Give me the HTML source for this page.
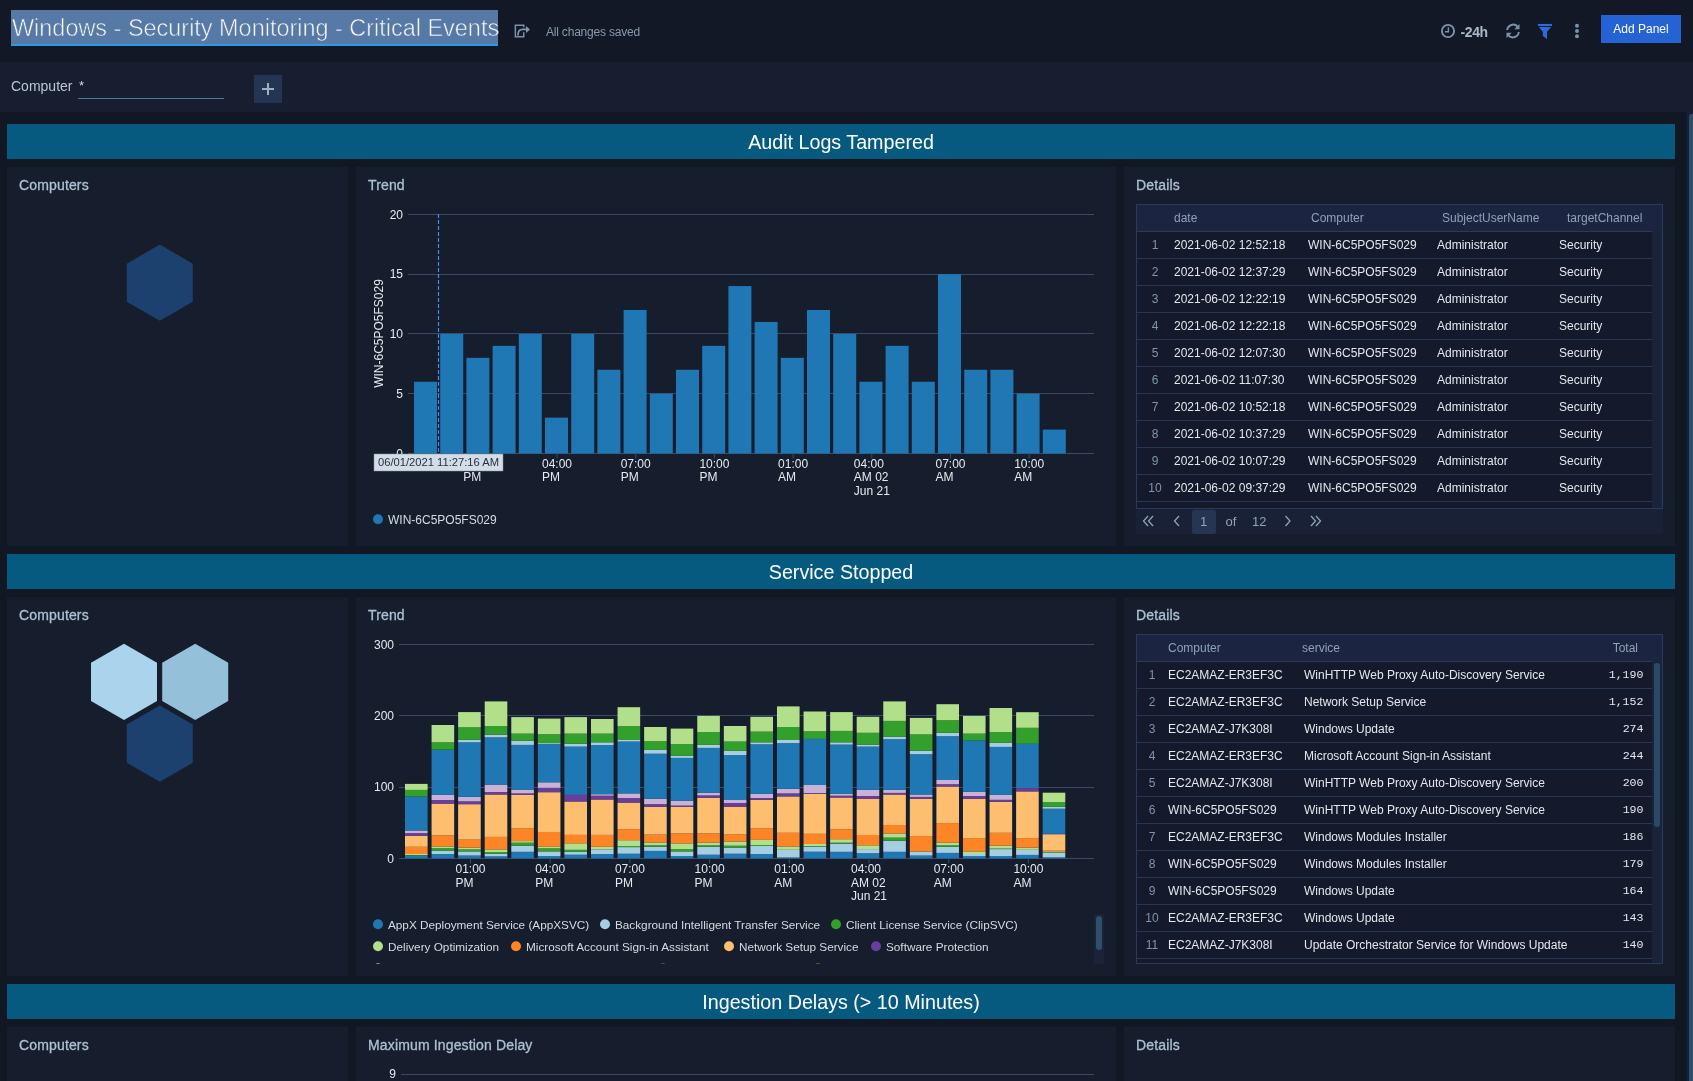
<!DOCTYPE html><html><head><meta charset="utf-8"><style>
*{box-sizing:border-box;margin:0;padding:0}
html,body{width:1693px;height:1081px;overflow:hidden;background:#111723;font-family:"Liberation Sans",sans-serif;}
body{will-change:transform;-webkit-font-smoothing:antialiased}
.a{position:absolute}
.hdr{left:0;top:0;width:1693px;height:62px;background:#121826}
.filt{left:0;top:62px;width:1693px;height:50px;background:#161e2f}
.band{left:7px;width:1668px;height:35px;background:#065a80;color:#fff;font-size:19.7px;text-align:center;line-height:37px}
.panel{background:#161e2e;height:379px}
.ptitle{position:absolute;left:12px;top:10px;font-size:14px;letter-spacing:0.15px;color:#adc0d3;-webkit-text-stroke:0.3px #adc0d3;white-space:nowrap}
svg text{font-family:"Liberation Sans",sans-serif}
.tbl{position:absolute;border:1px solid #293b58;background:#141a2b;overflow:hidden}
.th{position:absolute;left:0;top:0;right:0;height:27px;background:#1b2440}
.row{position:absolute;left:0;height:27px;border-bottom:1px solid #263753;}
.c{position:absolute;top:0;line-height:26px;font-size:12px;color:#e2e7ec;white-space:nowrap}
.hc{position:absolute;top:0;line-height:27px;font-size:12px;color:#8fa2b6;white-space:nowrap}
.num{color:#8194aa}
</style></head><body><div class="a hdr"></div><div class="a" style="left:11px;top:10px;width:487px;height:34px;background:#5779a6"></div><div class="a" style="left:11px;top:44px;width:487px;height:2px;background:#2a9ae6"></div><div class="a" style="left:12px;top:12.4px;font-size:23.45px;line-height:32px;color:#f4f6f8;-webkit-text-stroke:0.55px #5779a6;white-space:nowrap">Windows - Security Monitoring - Critical Events</div><svg class="a" style="left:505px;top:18px" width="35" height="26" viewBox="0 0 35 26"><path d="M18.75 9.3 V7.15 H10.35 V18.85 H18.75 V14.3" fill="none" stroke="#7890a8" stroke-width="1.5"/><path d="M12.9 17.6 Q12.9 11.4 17.5 11.4 H21.5" fill="none" stroke="#7f97ae" stroke-width="1.7"/><path d="M21 7.9 L25 11.4 L21 14.9 Z" fill="#7f97ae"/></svg><div class="a" style="left:546px;top:25px;font-size:12px;letter-spacing:-0.2px;color:#8799ad;white-space:nowrap">All changes saved</div><svg class="a" style="left:1440px;top:23px" width="16" height="16" viewBox="0 0 16 16"><circle cx="8" cy="8" r="6.1" fill="none" stroke="#7a92aa" stroke-width="1.9"/><path d="M8.4 4.3 V8.8 H4.9" fill="none" stroke="#7a92aa" stroke-width="1.4"/></svg><div class="a" style="left:1460.5px;top:23.5px;font-size:14px;letter-spacing:-0.4px;font-weight:bold;color:#a9bbcb;white-space:nowrap">-24h</div><svg class="a" style="left:1505px;top:23px" width="16" height="16" viewBox="0 0 16 16"><path d="M2.2 7 A6 6 0 0 1 12.6 3.6" fill="none" stroke="#7a93aa" stroke-width="2"/><path d="M14.5 1 V6.2 H9.3 Z" fill="#7a93aa"/><path d="M13.8 9 A6 6 0 0 1 3.4 12.4" fill="none" stroke="#7a93aa" stroke-width="2"/><path d="M1.5 15 V9.8 H6.7 Z" fill="#7a93aa"/></svg><svg class="a" style="left:1537px;top:23px" width="16" height="17" viewBox="0 0 16 17"><rect x="1" y="0.95" width="14" height="2.05" fill="#2b6bdc"/><path d="M1.8 4.04 H14.3 L10 8.8 V16 L5.8 13.1 V8.8 Z" fill="#2b6bdc"/></svg><svg class="a" style="left:1573px;top:23px" width="8" height="16" viewBox="0 0 8 16"><circle cx="4" cy="2.8" r="2" fill="#7a93aa"/><circle cx="4" cy="8" r="2" fill="#7a93aa"/><circle cx="4" cy="13.2" r="2" fill="#7a93aa"/></svg><div class="a" style="left:1601px;top:15px;width:80px;height:28px;background:#2563d5;color:#fff;font-size:12px;line-height:28px;text-align:center">Add Panel</div><div class="a filt"></div><div class="a" style="left:11px;top:78px;font-size:14px;color:#b8c6d4;white-space:nowrap">Computer</div><div class="a" style="left:79px;top:78px;font-size:13px;color:#d0dae4">*</div><div class="a" style="left:78px;top:97.5px;width:146px;height:1.3px;background:#4a7ba6"></div><div class="a" style="left:254px;top:75px;width:28px;height:28px;background:#243554"></div><svg class="a" style="left:254px;top:75px" width="28" height="28"><path d="M14 8 V20 M8 14 H20" stroke="#9cb0c4" stroke-width="2"/></svg><div class="a" style="left:1687px;top:112px;width:6px;height:969px;background:#18213a"></div><div class="a" style="left:1689px;top:114px;width:4px;height:967px;background:#2d4d68;border-radius:3px 0 0 0"></div><div class="a band" style="top:124px">Audit Logs Tampered</div><div class="a panel" style="left:7px;top:167px;width:341px"><div class="ptitle">Computers</div></div><div class="a panel" style="left:356px;top:167px;width:760px"><div class="ptitle">Trend</div></div><div class="a panel" style="left:1124px;top:167px;width:551px"><div class="ptitle">Details</div></div><div class="a band" style="top:554px">Service Stopped</div><div class="a panel" style="left:7px;top:597px;width:341px"><div class="ptitle">Computers</div></div><div class="a panel" style="left:356px;top:597px;width:760px"><div class="ptitle">Trend</div></div><div class="a panel" style="left:1124px;top:597px;width:551px"><div class="ptitle">Details</div></div><div class="a band" style="top:984px">Ingestion Delays (&gt; 10 Minutes)</div><div class="a panel" style="left:7px;top:1027px;width:341px"><div class="ptitle">Computers</div></div><div class="a panel" style="left:356px;top:1027px;width:760px"><div class="ptitle">Maximum Ingestion Delay</div></div><div class="a panel" style="left:1124px;top:1027px;width:551px"><div class="ptitle">Details</div></div><svg class="a" style="left:0;top:0" width="360" height="1081"><path d="M159.80,244.60 L192.80,263.65 L192.80,301.75 L159.80,320.80 L126.80,301.75 L126.80,263.65 Z" fill="#1c416f"/><path d="M124.00,643.80 L157.00,662.85 L157.00,700.95 L124.00,720.00 L91.00,700.95 L91.00,662.85 Z" fill="#a9d4eb"/><path d="M195.20,643.80 L228.20,662.85 L228.20,700.95 L195.20,720.00 L162.20,700.95 L162.20,662.85 Z" fill="#94c0da"/><path d="M159.80,705.50 L192.80,724.55 L192.80,762.65 L159.80,781.70 L126.80,762.65 L126.80,724.55 Z" fill="#1c416f"/></svg><svg class="a" style="left:356px;top:167px" width="760" height="379"><rect x="52.0" y="286" width="686.0" height="1" fill="#394a68"/><text x="47.0" y="290.80" font-size="12" fill="#e6eaee" text-anchor="end">0</text><rect x="52.0" y="226" width="686.0" height="1" fill="#394a68"/><text x="47.0" y="231.00" font-size="12" fill="#e6eaee" text-anchor="end">5</text><rect x="52.0" y="166" width="686.0" height="1" fill="#394a68"/><text x="47.0" y="171.20" font-size="12" fill="#e6eaee" text-anchor="end">10</text><rect x="52.0" y="107" width="686.0" height="1" fill="#394a68"/><text x="47.0" y="111.40" font-size="12" fill="#e6eaee" text-anchor="end">15</text><rect x="52.0" y="47" width="686.0" height="1" fill="#394a68"/><text x="47.0" y="51.60" font-size="12" fill="#e6eaee" text-anchor="end">20</text><rect x="58.00" y="214.74" width="23" height="71.76" fill="#1f77b4"/><rect x="84.20" y="166.90" width="23" height="119.60" fill="#1f77b4"/><rect x="110.40" y="190.82" width="23" height="95.68" fill="#1f77b4"/><rect x="136.60" y="178.86" width="23" height="107.64" fill="#1f77b4"/><rect x="162.80" y="166.90" width="23" height="119.60" fill="#1f77b4"/><rect x="189.00" y="250.62" width="23" height="35.88" fill="#1f77b4"/><rect x="215.20" y="166.90" width="23" height="119.60" fill="#1f77b4"/><rect x="241.40" y="202.78" width="23" height="83.72" fill="#1f77b4"/><rect x="267.60" y="142.98" width="23" height="143.52" fill="#1f77b4"/><rect x="293.80" y="226.70" width="23" height="59.80" fill="#1f77b4"/><rect x="320.00" y="202.78" width="23" height="83.72" fill="#1f77b4"/><rect x="346.20" y="178.86" width="23" height="107.64" fill="#1f77b4"/><rect x="372.40" y="119.06" width="23" height="167.44" fill="#1f77b4"/><rect x="398.60" y="154.94" width="23" height="131.56" fill="#1f77b4"/><rect x="424.80" y="190.82" width="23" height="95.68" fill="#1f77b4"/><rect x="451.00" y="142.98" width="23" height="143.52" fill="#1f77b4"/><rect x="477.20" y="166.90" width="23" height="119.60" fill="#1f77b4"/><rect x="503.40" y="214.74" width="23" height="71.76" fill="#1f77b4"/><rect x="529.60" y="178.86" width="23" height="107.64" fill="#1f77b4"/><rect x="555.80" y="214.74" width="23" height="71.76" fill="#1f77b4"/><rect x="582.00" y="107.10" width="23" height="179.40" fill="#1f77b4"/><rect x="608.20" y="202.78" width="23" height="83.72" fill="#1f77b4"/><rect x="634.40" y="202.78" width="23" height="83.72" fill="#1f77b4"/><rect x="660.60" y="226.70" width="23" height="59.80" fill="#1f77b4"/><rect x="686.80" y="262.58" width="23" height="23.92" fill="#1f77b4"/><rect x="121.8" y="286.5" width="1" height="5" fill="#394a68"/><text x="107.3" y="300.7" font-size="12" fill="#e6eaee">01:00</text><text x="107.3" y="314.4" font-size="12" fill="#e6eaee">PM</text><rect x="200.5" y="286.5" width="1" height="5" fill="#394a68"/><text x="186.0" y="300.7" font-size="12" fill="#e6eaee">04:00</text><text x="186.0" y="314.4" font-size="12" fill="#e6eaee">PM</text><rect x="279.2" y="286.5" width="1" height="5" fill="#394a68"/><text x="264.7" y="300.7" font-size="12" fill="#e6eaee">07:00</text><text x="264.7" y="314.4" font-size="12" fill="#e6eaee">PM</text><rect x="357.9" y="286.5" width="1" height="5" fill="#394a68"/><text x="343.4" y="300.7" font-size="12" fill="#e6eaee">10:00</text><text x="343.4" y="314.4" font-size="12" fill="#e6eaee">PM</text><rect x="436.6" y="286.5" width="1" height="5" fill="#394a68"/><text x="422.1" y="300.7" font-size="12" fill="#e6eaee">01:00</text><text x="422.1" y="314.4" font-size="12" fill="#e6eaee">AM</text><rect x="515.3" y="286.5" width="1" height="5" fill="#394a68"/><text x="497.8" y="300.7" font-size="12" fill="#e6eaee">04:00</text><text x="497.8" y="314.4" font-size="12" fill="#e6eaee">AM 02</text><text x="497.8" y="328.1" font-size="12" fill="#e6eaee">Jun 21</text><rect x="594.0" y="286.5" width="1" height="5" fill="#394a68"/><text x="579.5" y="300.7" font-size="12" fill="#e6eaee">07:00</text><text x="579.5" y="314.4" font-size="12" fill="#e6eaee">AM</text><rect x="672.7" y="286.5" width="1" height="5" fill="#394a68"/><text x="658.2" y="300.7" font-size="12" fill="#e6eaee">10:00</text><text x="658.2" y="314.4" font-size="12" fill="#e6eaee">AM</text><line x1="82.5" y1="47.0" x2="82.5" y2="287.0" stroke="#4a8ae6" stroke-width="1.2" stroke-dasharray="4,2"/><rect x="18.0" y="287.0" width="129" height="17" fill="#d3dde8" stroke="#8796a8" stroke-width="0.5"/><text x="22.0" y="299.3" font-size="11.2" fill="#27303b">06/01/2021 11:27:16 AM</text><text transform="translate(26.5,166.5) rotate(-90)" font-size="12" fill="#e6eaee" text-anchor="middle">WIN-6C5PO5FS029</text><circle cx="22.0" cy="352.3" r="5" fill="#1f77b4"/><text x="32.0" y="357.2" font-size="12" fill="#d4dbe2">WIN-6C5PO5FS029</text></svg><svg class="a" style="left:356px;top:597px" width="760" height="379"><rect x="43.0" y="261" width="695.0" height="1" fill="#394a68"/><text x="38.0" y="265.70" font-size="12" fill="#e6eaee" text-anchor="end">0</text><rect x="43.0" y="190" width="695.0" height="1" fill="#394a68"/><text x="38.0" y="194.37" font-size="12" fill="#e6eaee" text-anchor="end">100</text><rect x="43.0" y="118" width="695.0" height="1" fill="#394a68"/><text x="38.0" y="123.04" font-size="12" fill="#e6eaee" text-anchor="end">200</text><rect x="43.0" y="47" width="695.0" height="1" fill="#394a68"/><text x="38.0" y="51.71" font-size="12" fill="#e6eaee" text-anchor="end">300</text><rect x="49.00" y="258.60" width="22.6" height="2.80" fill="#1f77b4"/><rect x="49.00" y="258.00" width="22.6" height="0.60" fill="#33a02c"/><rect x="49.00" y="257.00" width="22.6" height="1.00" fill="#b2df8a"/><rect x="49.00" y="249.80" width="22.6" height="7.20" fill="#fd8526"/><rect x="49.00" y="238.70" width="22.6" height="11.10" fill="#fdbf6f"/><rect x="49.00" y="236.10" width="22.6" height="2.60" fill="#6a3d9a"/><rect x="49.00" y="233.50" width="22.6" height="2.60" fill="#cab2d6"/><rect x="49.00" y="199.40" width="22.6" height="34.10" fill="#1f77b4"/><rect x="49.00" y="192.90" width="22.6" height="6.50" fill="#33a02c"/><rect x="49.00" y="186.90" width="22.6" height="6.00" fill="#b2df8a"/><rect x="75.57" y="257.00" width="22.6" height="4.40" fill="#1f77b4"/><rect x="75.57" y="253.60" width="22.6" height="3.40" fill="#a6cee3"/><rect x="75.57" y="251.00" width="22.6" height="2.60" fill="#33a02c"/><rect x="75.57" y="249.50" width="22.6" height="1.50" fill="#b2df8a"/><rect x="75.57" y="238.40" width="22.6" height="11.10" fill="#fd8526"/><rect x="75.57" y="206.60" width="22.6" height="31.80" fill="#fdbf6f"/><rect x="75.57" y="203.00" width="22.6" height="3.60" fill="#6a3d9a"/><rect x="75.57" y="197.90" width="22.6" height="5.10" fill="#cab2d6"/><rect x="75.57" y="152.60" width="22.6" height="45.30" fill="#1f77b4"/><rect x="75.57" y="145.30" width="22.6" height="7.30" fill="#33a02c"/><rect x="75.57" y="128.00" width="22.6" height="17.30" fill="#b2df8a"/><rect x="102.14" y="258.50" width="22.6" height="2.90" fill="#1f77b4"/><rect x="102.14" y="254.40" width="22.6" height="4.10" fill="#a6cee3"/><rect x="102.14" y="252.40" width="22.6" height="2.00" fill="#33a02c"/><rect x="102.14" y="250.60" width="22.6" height="1.80" fill="#b2df8a"/><rect x="102.14" y="242.60" width="22.6" height="8.00" fill="#fd8526"/><rect x="102.14" y="207.20" width="22.6" height="35.40" fill="#fdbf6f"/><rect x="102.14" y="204.30" width="22.6" height="2.90" fill="#6a3d9a"/><rect x="102.14" y="199.80" width="22.6" height="4.50" fill="#cab2d6"/><rect x="102.14" y="145.30" width="22.6" height="54.50" fill="#1f77b4"/><rect x="102.14" y="142.70" width="22.6" height="2.60" fill="#a6cee3"/><rect x="102.14" y="130.30" width="22.6" height="12.40" fill="#33a02c"/><rect x="102.14" y="115.10" width="22.6" height="15.20" fill="#b2df8a"/><rect x="128.71" y="259.30" width="22.6" height="2.10" fill="#1f77b4"/><rect x="128.71" y="256.70" width="22.6" height="2.60" fill="#a6cee3"/><rect x="128.71" y="255.10" width="22.6" height="1.60" fill="#33a02c"/><rect x="128.71" y="252.40" width="22.6" height="2.70" fill="#b2df8a"/><rect x="128.71" y="239.90" width="22.6" height="12.50" fill="#fd8526"/><rect x="128.71" y="197.50" width="22.6" height="42.40" fill="#fdbf6f"/><rect x="128.71" y="195.00" width="22.6" height="2.50" fill="#6a3d9a"/><rect x="128.71" y="187.60" width="22.6" height="7.40" fill="#cab2d6"/><rect x="128.71" y="140.30" width="22.6" height="47.30" fill="#1f77b4"/><rect x="128.71" y="137.70" width="22.6" height="2.60" fill="#a6cee3"/><rect x="128.71" y="129.00" width="22.6" height="8.70" fill="#33a02c"/><rect x="128.71" y="104.40" width="22.6" height="24.60" fill="#b2df8a"/><rect x="155.28" y="254.80" width="22.6" height="6.60" fill="#1f77b4"/><rect x="155.28" y="248.70" width="22.6" height="6.10" fill="#a6cee3"/><rect x="155.28" y="245.70" width="22.6" height="3.00" fill="#33a02c"/><rect x="155.28" y="244.10" width="22.6" height="1.60" fill="#b2df8a"/><rect x="155.28" y="231.20" width="22.6" height="12.90" fill="#fd8526"/><rect x="155.28" y="197.90" width="22.6" height="33.30" fill="#fdbf6f"/><rect x="155.28" y="196.40" width="22.6" height="1.50" fill="#6a3d9a"/><rect x="155.28" y="192.60" width="22.6" height="3.80" fill="#cab2d6"/><rect x="155.28" y="147.90" width="22.6" height="44.70" fill="#1f77b4"/><rect x="155.28" y="143.80" width="22.6" height="4.10" fill="#a6cee3"/><rect x="155.28" y="136.60" width="22.6" height="7.20" fill="#33a02c"/><rect x="155.28" y="120.10" width="22.6" height="16.50" fill="#b2df8a"/><rect x="181.85" y="259.00" width="22.6" height="2.40" fill="#1f77b4"/><rect x="181.85" y="254.40" width="22.6" height="4.60" fill="#a6cee3"/><rect x="181.85" y="251.30" width="22.6" height="3.10" fill="#33a02c"/><rect x="181.85" y="249.80" width="22.6" height="1.50" fill="#b2df8a"/><rect x="181.85" y="235.00" width="22.6" height="14.80" fill="#fd8526"/><rect x="181.85" y="195.20" width="22.6" height="39.80" fill="#fdbf6f"/><rect x="181.85" y="190.80" width="22.6" height="4.40" fill="#6a3d9a"/><rect x="181.85" y="185.30" width="22.6" height="5.50" fill="#cab2d6"/><rect x="181.85" y="147.10" width="22.6" height="38.20" fill="#1f77b4"/><rect x="181.85" y="146.10" width="22.6" height="1.00" fill="#a6cee3"/><rect x="181.85" y="137.20" width="22.6" height="8.90" fill="#33a02c"/><rect x="181.85" y="121.60" width="22.6" height="15.60" fill="#b2df8a"/><rect x="208.42" y="257.70" width="22.6" height="3.70" fill="#1f77b4"/><rect x="208.42" y="254.80" width="22.6" height="2.90" fill="#a6cee3"/><rect x="208.42" y="252.80" width="22.6" height="2.00" fill="#33a02c"/><rect x="208.42" y="246.30" width="22.6" height="6.50" fill="#b2df8a"/><rect x="208.42" y="237.90" width="22.6" height="8.40" fill="#fd8526"/><rect x="208.42" y="204.50" width="22.6" height="33.40" fill="#fdbf6f"/><rect x="208.42" y="197.90" width="22.6" height="6.60" fill="#6a3d9a"/><rect x="208.42" y="149.60" width="22.6" height="48.30" fill="#1f77b4"/><rect x="208.42" y="146.80" width="22.6" height="2.80" fill="#a6cee3"/><rect x="208.42" y="136.60" width="22.6" height="10.20" fill="#33a02c"/><rect x="208.42" y="120.10" width="22.6" height="16.50" fill="#b2df8a"/><rect x="234.99" y="257.00" width="22.6" height="4.40" fill="#1f77b4"/><rect x="234.99" y="252.40" width="22.6" height="4.60" fill="#a6cee3"/><rect x="234.99" y="249.80" width="22.6" height="2.60" fill="#b2df8a"/><rect x="234.99" y="237.90" width="22.6" height="11.90" fill="#fd8526"/><rect x="234.99" y="202.50" width="22.6" height="35.40" fill="#fdbf6f"/><rect x="234.99" y="198.70" width="22.6" height="3.80" fill="#6a3d9a"/><rect x="234.99" y="197.20" width="22.6" height="1.50" fill="#cab2d6"/><rect x="234.99" y="148.00" width="22.6" height="49.20" fill="#1f77b4"/><rect x="234.99" y="145.30" width="22.6" height="2.70" fill="#a6cee3"/><rect x="234.99" y="136.60" width="22.6" height="8.70" fill="#33a02c"/><rect x="234.99" y="122.00" width="22.6" height="14.60" fill="#b2df8a"/><rect x="261.56" y="256.70" width="22.6" height="4.70" fill="#1f77b4"/><rect x="261.56" y="250.10" width="22.6" height="6.60" fill="#a6cee3"/><rect x="261.56" y="249.00" width="22.6" height="1.10" fill="#33a02c"/><rect x="261.56" y="243.20" width="22.6" height="5.80" fill="#b2df8a"/><rect x="261.56" y="232.20" width="22.6" height="11.00" fill="#fd8526"/><rect x="261.56" y="205.60" width="22.6" height="26.60" fill="#fdbf6f"/><rect x="261.56" y="201.00" width="22.6" height="4.60" fill="#6a3d9a"/><rect x="261.56" y="196.40" width="22.6" height="4.60" fill="#cab2d6"/><rect x="261.56" y="144.50" width="22.6" height="51.90" fill="#1f77b4"/><rect x="261.56" y="143.00" width="22.6" height="1.50" fill="#a6cee3"/><rect x="261.56" y="129.00" width="22.6" height="14.00" fill="#33a02c"/><rect x="261.56" y="110.20" width="22.6" height="18.80" fill="#b2df8a"/><rect x="288.13" y="253.90" width="22.6" height="7.50" fill="#1f77b4"/><rect x="288.13" y="249.80" width="22.6" height="4.10" fill="#a6cee3"/><rect x="288.13" y="248.30" width="22.6" height="1.50" fill="#33a02c"/><rect x="288.13" y="245.50" width="22.6" height="2.80" fill="#b2df8a"/><rect x="288.13" y="237.60" width="22.6" height="7.90" fill="#fd8526"/><rect x="288.13" y="209.80" width="22.6" height="27.80" fill="#fdbf6f"/><rect x="288.13" y="207.10" width="22.6" height="2.70" fill="#6a3d9a"/><rect x="288.13" y="201.70" width="22.6" height="5.40" fill="#cab2d6"/><rect x="288.13" y="156.70" width="22.6" height="45.00" fill="#1f77b4"/><rect x="288.13" y="152.90" width="22.6" height="3.80" fill="#a6cee3"/><rect x="288.13" y="144.20" width="22.6" height="8.70" fill="#33a02c"/><rect x="288.13" y="130.00" width="22.6" height="14.20" fill="#b2df8a"/><rect x="314.70" y="259.00" width="22.6" height="2.40" fill="#1f77b4"/><rect x="314.70" y="254.40" width="22.6" height="4.60" fill="#a6cee3"/><rect x="314.70" y="252.10" width="22.6" height="2.30" fill="#33a02c"/><rect x="314.70" y="246.40" width="22.6" height="5.70" fill="#b2df8a"/><rect x="314.70" y="236.40" width="22.6" height="10.00" fill="#fd8526"/><rect x="314.70" y="209.80" width="22.6" height="26.60" fill="#fdbf6f"/><rect x="314.70" y="208.60" width="22.6" height="1.20" fill="#6a3d9a"/><rect x="314.70" y="203.70" width="22.6" height="4.90" fill="#cab2d6"/><rect x="314.70" y="160.90" width="22.6" height="42.80" fill="#1f77b4"/><rect x="314.70" y="158.70" width="22.6" height="2.20" fill="#a6cee3"/><rect x="314.70" y="147.10" width="22.6" height="11.60" fill="#33a02c"/><rect x="314.70" y="131.60" width="22.6" height="15.50" fill="#b2df8a"/><rect x="341.27" y="257.70" width="22.6" height="3.70" fill="#1f77b4"/><rect x="341.27" y="249.80" width="22.6" height="7.90" fill="#a6cee3"/><rect x="341.27" y="248.30" width="22.6" height="1.50" fill="#33a02c"/><rect x="341.27" y="245.70" width="22.6" height="2.60" fill="#b2df8a"/><rect x="341.27" y="236.40" width="22.6" height="9.30" fill="#fd8526"/><rect x="341.27" y="200.70" width="22.6" height="35.70" fill="#fdbf6f"/><rect x="341.27" y="198.40" width="22.6" height="2.30" fill="#6a3d9a"/><rect x="341.27" y="195.90" width="22.6" height="2.50" fill="#cab2d6"/><rect x="341.27" y="150.90" width="22.6" height="45.00" fill="#1f77b4"/><rect x="341.27" y="147.90" width="22.6" height="3.00" fill="#a6cee3"/><rect x="341.27" y="135.10" width="22.6" height="12.80" fill="#33a02c"/><rect x="341.27" y="118.90" width="22.6" height="16.20" fill="#b2df8a"/><rect x="367.84" y="256.70" width="22.6" height="4.70" fill="#1f77b4"/><rect x="367.84" y="250.60" width="22.6" height="6.10" fill="#a6cee3"/><rect x="367.84" y="248.70" width="22.6" height="1.90" fill="#33a02c"/><rect x="367.84" y="244.50" width="22.6" height="4.20" fill="#b2df8a"/><rect x="367.84" y="237.10" width="22.6" height="7.40" fill="#fd8526"/><rect x="367.84" y="209.70" width="22.6" height="27.40" fill="#fdbf6f"/><rect x="367.84" y="206.00" width="22.6" height="3.70" fill="#6a3d9a"/><rect x="367.84" y="203.00" width="22.6" height="3.00" fill="#cab2d6"/><rect x="367.84" y="158.00" width="22.6" height="45.00" fill="#1f77b4"/><rect x="367.84" y="153.70" width="22.6" height="4.30" fill="#a6cee3"/><rect x="367.84" y="144.50" width="22.6" height="9.20" fill="#33a02c"/><rect x="367.84" y="129.00" width="22.6" height="15.50" fill="#b2df8a"/><rect x="394.41" y="257.00" width="22.6" height="4.40" fill="#1f77b4"/><rect x="394.41" y="249.00" width="22.6" height="8.00" fill="#a6cee3"/><rect x="394.41" y="248.00" width="22.6" height="1.00" fill="#33a02c"/><rect x="394.41" y="242.90" width="22.6" height="5.10" fill="#b2df8a"/><rect x="394.41" y="231.20" width="22.6" height="11.70" fill="#fd8526"/><rect x="394.41" y="202.80" width="22.6" height="28.40" fill="#fdbf6f"/><rect x="394.41" y="201.00" width="22.6" height="1.80" fill="#6a3d9a"/><rect x="394.41" y="196.90" width="22.6" height="4.10" fill="#cab2d6"/><rect x="394.41" y="147.30" width="22.6" height="49.60" fill="#1f77b4"/><rect x="394.41" y="145.30" width="22.6" height="2.00" fill="#a6cee3"/><rect x="394.41" y="134.60" width="22.6" height="10.70" fill="#33a02c"/><rect x="394.41" y="119.80" width="22.6" height="14.80" fill="#b2df8a"/><rect x="420.98" y="260.50" width="22.6" height="0.90" fill="#1f77b4"/><rect x="420.98" y="252.80" width="22.6" height="7.70" fill="#a6cee3"/><rect x="420.98" y="249.50" width="22.6" height="3.30" fill="#b2df8a"/><rect x="420.98" y="235.80" width="22.6" height="13.70" fill="#fd8526"/><rect x="420.98" y="199.40" width="22.6" height="36.40" fill="#fdbf6f"/><rect x="420.98" y="196.40" width="22.6" height="3.00" fill="#6a3d9a"/><rect x="420.98" y="191.80" width="22.6" height="4.60" fill="#cab2d6"/><rect x="420.98" y="146.10" width="22.6" height="45.70" fill="#1f77b4"/><rect x="420.98" y="143.00" width="22.6" height="3.10" fill="#a6cee3"/><rect x="420.98" y="130.00" width="22.6" height="13.00" fill="#33a02c"/><rect x="420.98" y="109.40" width="22.6" height="20.60" fill="#b2df8a"/><rect x="447.55" y="254.70" width="22.6" height="6.70" fill="#1f77b4"/><rect x="447.55" y="249.50" width="22.6" height="5.20" fill="#a6cee3"/><rect x="447.55" y="249.00" width="22.6" height="0.50" fill="#33a02c"/><rect x="447.55" y="247.00" width="22.6" height="2.00" fill="#b2df8a"/><rect x="447.55" y="236.80" width="22.6" height="10.20" fill="#fd8526"/><rect x="447.55" y="196.90" width="22.6" height="39.90" fill="#fdbf6f"/><rect x="447.55" y="196.10" width="22.6" height="0.80" fill="#6a3d9a"/><rect x="447.55" y="188.00" width="22.6" height="8.10" fill="#cab2d6"/><rect x="447.55" y="141.90" width="22.6" height="46.10" fill="#1f77b4"/><rect x="447.55" y="134.30" width="22.6" height="7.60" fill="#33a02c"/><rect x="447.55" y="114.50" width="22.6" height="19.80" fill="#b2df8a"/><rect x="474.12" y="254.80" width="22.6" height="6.60" fill="#1f77b4"/><rect x="474.12" y="246.70" width="22.6" height="8.10" fill="#a6cee3"/><rect x="474.12" y="245.70" width="22.6" height="1.00" fill="#33a02c"/><rect x="474.12" y="242.20" width="22.6" height="3.50" fill="#b2df8a"/><rect x="474.12" y="232.20" width="22.6" height="10.00" fill="#fd8526"/><rect x="474.12" y="200.50" width="22.6" height="31.70" fill="#fdbf6f"/><rect x="474.12" y="198.70" width="22.6" height="1.80" fill="#6a3d9a"/><rect x="474.12" y="196.90" width="22.6" height="1.80" fill="#cab2d6"/><rect x="474.12" y="147.60" width="22.6" height="49.30" fill="#1f77b4"/><rect x="474.12" y="145.30" width="22.6" height="2.30" fill="#a6cee3"/><rect x="474.12" y="133.90" width="22.6" height="11.40" fill="#33a02c"/><rect x="474.12" y="115.10" width="22.6" height="18.80" fill="#b2df8a"/><rect x="500.69" y="256.20" width="22.6" height="5.20" fill="#1f77b4"/><rect x="500.69" y="252.10" width="22.6" height="4.10" fill="#a6cee3"/><rect x="500.69" y="248.30" width="22.6" height="3.80" fill="#b2df8a"/><rect x="500.69" y="238.00" width="22.6" height="10.30" fill="#fd8526"/><rect x="500.69" y="201.70" width="22.6" height="36.30" fill="#fdbf6f"/><rect x="500.69" y="199.00" width="22.6" height="2.70" fill="#6a3d9a"/><rect x="500.69" y="192.90" width="22.6" height="6.10" fill="#cab2d6"/><rect x="500.69" y="149.60" width="22.6" height="43.30" fill="#1f77b4"/><rect x="500.69" y="147.60" width="22.6" height="2.00" fill="#a6cee3"/><rect x="500.69" y="135.80" width="22.6" height="11.80" fill="#33a02c"/><rect x="500.69" y="119.80" width="22.6" height="16.00" fill="#b2df8a"/><rect x="527.26" y="254.80" width="22.6" height="6.60" fill="#1f77b4"/><rect x="527.26" y="243.70" width="22.6" height="11.10" fill="#a6cee3"/><rect x="527.26" y="240.60" width="22.6" height="3.10" fill="#33a02c"/><rect x="527.26" y="236.50" width="22.6" height="4.10" fill="#b2df8a"/><rect x="527.26" y="228.00" width="22.6" height="8.50" fill="#fd8526"/><rect x="527.26" y="197.50" width="22.6" height="30.50" fill="#fdbf6f"/><rect x="527.26" y="195.90" width="22.6" height="1.60" fill="#6a3d9a"/><rect x="527.26" y="192.90" width="22.6" height="3.00" fill="#cab2d6"/><rect x="527.26" y="142.20" width="22.6" height="50.70" fill="#1f77b4"/><rect x="527.26" y="139.60" width="22.6" height="2.60" fill="#a6cee3"/><rect x="527.26" y="123.90" width="22.6" height="15.70" fill="#33a02c"/><rect x="527.26" y="104.40" width="22.6" height="19.50" fill="#b2df8a"/><rect x="553.83" y="258.50" width="22.6" height="2.90" fill="#1f77b4"/><rect x="553.83" y="254.70" width="22.6" height="3.80" fill="#a6cee3"/><rect x="553.83" y="254.40" width="22.6" height="0.30" fill="#b2df8a"/><rect x="553.83" y="239.10" width="22.6" height="15.30" fill="#fd8526"/><rect x="553.83" y="201.70" width="22.6" height="37.40" fill="#fdbf6f"/><rect x="553.83" y="199.90" width="22.6" height="1.80" fill="#6a3d9a"/><rect x="553.83" y="197.50" width="22.6" height="2.40" fill="#cab2d6"/><rect x="553.83" y="157.20" width="22.6" height="40.30" fill="#1f77b4"/><rect x="553.83" y="153.70" width="22.6" height="3.50" fill="#a6cee3"/><rect x="553.83" y="137.40" width="22.6" height="16.30" fill="#33a02c"/><rect x="553.83" y="120.90" width="22.6" height="16.50" fill="#b2df8a"/><rect x="580.40" y="255.90" width="22.6" height="5.50" fill="#1f77b4"/><rect x="580.40" y="249.80" width="22.6" height="6.10" fill="#a6cee3"/><rect x="580.40" y="248.30" width="22.6" height="1.50" fill="#33a02c"/><rect x="580.40" y="245.70" width="22.6" height="2.60" fill="#b2df8a"/><rect x="580.40" y="226.10" width="22.6" height="19.60" fill="#fd8526"/><rect x="580.40" y="189.50" width="22.6" height="36.60" fill="#fdbf6f"/><rect x="580.40" y="187.20" width="22.6" height="2.30" fill="#6a3d9a"/><rect x="580.40" y="183.00" width="22.6" height="4.20" fill="#cab2d6"/><rect x="580.40" y="139.20" width="22.6" height="43.80" fill="#1f77b4"/><rect x="580.40" y="135.80" width="22.6" height="3.40" fill="#a6cee3"/><rect x="580.40" y="123.20" width="22.6" height="12.60" fill="#33a02c"/><rect x="580.40" y="107.20" width="22.6" height="16.00" fill="#b2df8a"/><rect x="606.97" y="259.00" width="22.6" height="2.40" fill="#1f77b4"/><rect x="606.97" y="257.00" width="22.6" height="2.00" fill="#a6cee3"/><rect x="606.97" y="254.40" width="22.6" height="2.60" fill="#b2df8a"/><rect x="606.97" y="241.10" width="22.6" height="13.30" fill="#fd8526"/><rect x="606.97" y="201.70" width="22.6" height="39.40" fill="#fdbf6f"/><rect x="606.97" y="199.00" width="22.6" height="2.70" fill="#6a3d9a"/><rect x="606.97" y="194.90" width="22.6" height="4.10" fill="#cab2d6"/><rect x="606.97" y="143.30" width="22.6" height="51.60" fill="#1f77b4"/><rect x="606.97" y="136.60" width="22.6" height="6.70" fill="#33a02c"/><rect x="606.97" y="118.90" width="22.6" height="17.70" fill="#b2df8a"/><rect x="633.54" y="259.00" width="22.6" height="2.40" fill="#1f77b4"/><rect x="633.54" y="252.10" width="22.6" height="6.90" fill="#a6cee3"/><rect x="633.54" y="251.60" width="22.6" height="0.50" fill="#33a02c"/><rect x="633.54" y="248.70" width="22.6" height="2.90" fill="#b2df8a"/><rect x="633.54" y="235.80" width="22.6" height="12.90" fill="#fd8526"/><rect x="633.54" y="204.80" width="22.6" height="31.00" fill="#fdbf6f"/><rect x="633.54" y="202.80" width="22.6" height="2.00" fill="#6a3d9a"/><rect x="633.54" y="197.90" width="22.6" height="4.90" fill="#cab2d6"/><rect x="633.54" y="149.90" width="22.6" height="48.00" fill="#1f77b4"/><rect x="633.54" y="145.80" width="22.6" height="4.10" fill="#a6cee3"/><rect x="633.54" y="135.10" width="22.6" height="10.70" fill="#33a02c"/><rect x="633.54" y="111.00" width="22.6" height="24.10" fill="#b2df8a"/><rect x="660.11" y="257.90" width="22.6" height="3.50" fill="#1f77b4"/><rect x="660.11" y="252.80" width="22.6" height="5.10" fill="#a6cee3"/><rect x="660.11" y="250.60" width="22.6" height="2.20" fill="#b2df8a"/><rect x="660.11" y="241.10" width="22.6" height="9.50" fill="#fd8526"/><rect x="660.11" y="194.40" width="22.6" height="46.70" fill="#fdbf6f"/><rect x="660.11" y="191.10" width="22.6" height="3.30" fill="#6a3d9a"/><rect x="660.11" y="146.80" width="22.6" height="44.30" fill="#1f77b4"/><rect x="660.11" y="130.80" width="22.6" height="16.00" fill="#33a02c"/><rect x="660.11" y="115.20" width="22.6" height="15.60" fill="#b2df8a"/><rect x="686.68" y="260.30" width="22.6" height="1.10" fill="#1f77b4"/><rect x="686.68" y="255.90" width="22.6" height="4.40" fill="#a6cee3"/><rect x="686.68" y="255.30" width="22.6" height="0.60" fill="#33a02c"/><rect x="686.68" y="254.20" width="22.6" height="1.10" fill="#b2df8a"/><rect x="686.68" y="253.00" width="22.6" height="1.20" fill="#fd8526"/><rect x="686.68" y="237.50" width="22.6" height="15.50" fill="#fdbf6f"/><rect x="686.68" y="236.70" width="22.6" height="0.80" fill="#cab2d6"/><rect x="686.68" y="211.70" width="22.6" height="25.00" fill="#1f77b4"/><rect x="686.68" y="209.80" width="22.6" height="1.90" fill="#a6cee3"/><rect x="686.68" y="205.10" width="22.6" height="4.70" fill="#33a02c"/><rect x="686.68" y="195.70" width="22.6" height="9.40" fill="#b2df8a"/><rect x="114.0" y="261.4" width="1" height="5" fill="#394a68"/><text x="99.5" y="275.8" font-size="12" fill="#e6eaee">01:00</text><text x="99.5" y="289.5" font-size="12" fill="#e6eaee">PM</text><rect x="193.7" y="261.4" width="1" height="5" fill="#394a68"/><text x="179.2" y="275.8" font-size="12" fill="#e6eaee">04:00</text><text x="179.2" y="289.5" font-size="12" fill="#e6eaee">PM</text><rect x="273.4" y="261.4" width="1" height="5" fill="#394a68"/><text x="258.9" y="275.8" font-size="12" fill="#e6eaee">07:00</text><text x="258.9" y="289.5" font-size="12" fill="#e6eaee">PM</text><rect x="353.1" y="261.4" width="1" height="5" fill="#394a68"/><text x="338.6" y="275.8" font-size="12" fill="#e6eaee">10:00</text><text x="338.6" y="289.5" font-size="12" fill="#e6eaee">PM</text><rect x="432.8" y="261.4" width="1" height="5" fill="#394a68"/><text x="418.3" y="275.8" font-size="12" fill="#e6eaee">01:00</text><text x="418.3" y="289.5" font-size="12" fill="#e6eaee">AM</text><rect x="512.5" y="261.4" width="1" height="5" fill="#394a68"/><text x="495.0" y="275.8" font-size="12" fill="#e6eaee">04:00</text><text x="495.0" y="289.5" font-size="12" fill="#e6eaee">AM 02</text><text x="495.0" y="303.2" font-size="12" fill="#e6eaee">Jun 21</text><rect x="592.2" y="261.4" width="1" height="5" fill="#394a68"/><text x="577.7" y="275.8" font-size="12" fill="#e6eaee">07:00</text><text x="577.7" y="289.5" font-size="12" fill="#e6eaee">AM</text><rect x="671.9" y="261.4" width="1" height="5" fill="#394a68"/><text x="657.4" y="275.8" font-size="12" fill="#e6eaee">10:00</text><text x="657.4" y="289.5" font-size="12" fill="#e6eaee">AM</text><defs><clipPath id="lc"><rect x="0" y="311.0" width="740" height="56.0"/></clipPath></defs><g clip-path="url(#lc)"><circle cx="22.0" cy="327.3" r="5" fill="#1f77b4"/><text x="32.0" y="332.2" font-size="11.75" fill="#d4dbe2">AppX Deployment Service (AppXSVC)</text><circle cx="249.0" cy="327.3" r="5" fill="#a6cee3"/><text x="259.0" y="332.2" font-size="11.75" fill="#d4dbe2">Background Intelligent Transfer Service</text><circle cx="480.0" cy="327.3" r="5" fill="#33a02c"/><text x="490.0" y="332.2" font-size="11.75" fill="#d4dbe2">Client License Service (ClipSVC)</text><circle cx="22.0" cy="349.3" r="5" fill="#b2df8a"/><text x="32.0" y="354.2" font-size="11.75" fill="#d4dbe2">Delivery Optimization</text><circle cx="160.0" cy="349.3" r="5" fill="#fd8526"/><text x="170.0" y="354.2" font-size="11.75" fill="#d4dbe2">Microsoft Account Sign-in Assistant</text><circle cx="373.0" cy="349.3" r="5" fill="#fdbf6f"/><text x="383.0" y="354.2" font-size="11.75" fill="#d4dbe2">Network Setup Service</text><circle cx="520.0" cy="349.3" r="5" fill="#6a3d9a"/><text x="530.0" y="354.2" font-size="11.75" fill="#d4dbe2">Software Protection</text><circle cx="22.0" cy="371.3" r="5" fill="#cab2d6"/><circle cx="307.0" cy="371.3" r="5" fill="#1f77b4"/><circle cx="462.0" cy="371.3" r="5" fill="#33a02c"/></g><rect x="738.0" y="317.0" width="10" height="50" fill="#1a2338"/><rect x="740.0" y="319.0" width="6" height="34" rx="3" fill="#2f5068"/></svg><div class="tbl" style="left:1136px;top:204px;width:527px;height:305px"><div class="th"></div><div style="position:absolute;left:0;top:26px;width:515px;height:1px;background:#293b58"></div><div style="position:absolute;left:515px;top:27px;width:10px;bottom:0;background:#19233a"></div><div class="hc" style="left:37px">date</div><div class="hc" style="left:174px">Computer</div><div class="hc" style="left:305px">SubjectUserName</div><div class="hc" style="left:430px">targetChannel</div><div class="row" style="top:27px;width:515px"><div class="c num" style="left:6px;width:24px;text-align:center">1</div><div class="c" style="left:37px;">2021-06-02 12:52:18</div><div class="c" style="left:171px;">WIN-6C5PO5FS029</div><div class="c" style="left:300px;">Administrator</div><div class="c" style="left:422px;">Security</div></div><div class="row" style="top:54px;width:515px"><div class="c num" style="left:6px;width:24px;text-align:center">2</div><div class="c" style="left:37px;">2021-06-02 12:37:29</div><div class="c" style="left:171px;">WIN-6C5PO5FS029</div><div class="c" style="left:300px;">Administrator</div><div class="c" style="left:422px;">Security</div></div><div class="row" style="top:81px;width:515px"><div class="c num" style="left:6px;width:24px;text-align:center">3</div><div class="c" style="left:37px;">2021-06-02 12:22:19</div><div class="c" style="left:171px;">WIN-6C5PO5FS029</div><div class="c" style="left:300px;">Administrator</div><div class="c" style="left:422px;">Security</div></div><div class="row" style="top:108px;width:515px"><div class="c num" style="left:6px;width:24px;text-align:center">4</div><div class="c" style="left:37px;">2021-06-02 12:22:18</div><div class="c" style="left:171px;">WIN-6C5PO5FS029</div><div class="c" style="left:300px;">Administrator</div><div class="c" style="left:422px;">Security</div></div><div class="row" style="top:135px;width:515px"><div class="c num" style="left:6px;width:24px;text-align:center">5</div><div class="c" style="left:37px;">2021-06-02 12:07:30</div><div class="c" style="left:171px;">WIN-6C5PO5FS029</div><div class="c" style="left:300px;">Administrator</div><div class="c" style="left:422px;">Security</div></div><div class="row" style="top:162px;width:515px"><div class="c num" style="left:6px;width:24px;text-align:center">6</div><div class="c" style="left:37px;">2021-06-02 11:07:30</div><div class="c" style="left:171px;">WIN-6C5PO5FS029</div><div class="c" style="left:300px;">Administrator</div><div class="c" style="left:422px;">Security</div></div><div class="row" style="top:189px;width:515px"><div class="c num" style="left:6px;width:24px;text-align:center">7</div><div class="c" style="left:37px;">2021-06-02 10:52:18</div><div class="c" style="left:171px;">WIN-6C5PO5FS029</div><div class="c" style="left:300px;">Administrator</div><div class="c" style="left:422px;">Security</div></div><div class="row" style="top:216px;width:515px"><div class="c num" style="left:6px;width:24px;text-align:center">8</div><div class="c" style="left:37px;">2021-06-02 10:37:29</div><div class="c" style="left:171px;">WIN-6C5PO5FS029</div><div class="c" style="left:300px;">Administrator</div><div class="c" style="left:422px;">Security</div></div><div class="row" style="top:243px;width:515px"><div class="c num" style="left:6px;width:24px;text-align:center">9</div><div class="c" style="left:37px;">2021-06-02 10:07:29</div><div class="c" style="left:171px;">WIN-6C5PO5FS029</div><div class="c" style="left:300px;">Administrator</div><div class="c" style="left:422px;">Security</div></div><div class="row" style="top:270px;width:515px"><div class="c num" style="left:6px;width:24px;text-align:center">10</div><div class="c" style="left:37px;">2021-06-02 09:37:29</div><div class="c" style="left:171px;">WIN-6C5PO5FS029</div><div class="c" style="left:300px;">Administrator</div><div class="c" style="left:422px;">Security</div></div><div class="row" style="top:297px;width:515px"><div class="c num" style="left:6px;width:24px;text-align:center">11</div><div class="c" style="left:37px;"></div><div class="c" style="left:171px;"></div><div class="c" style="left:300px;"></div><div class="c" style="left:422px;"></div></div></div><div class="a" style="left:1136px;top:509px;width:527px;height:25px;background:#182136"></div><div class="a" style="left:1192px;top:510px;width:24px;height:24px;background:#253552;border-radius:2px"></div><svg class="a" style="left:1136px;top:509px" width="200" height="25"><path d="M12 7 L7.5 12 L12 17 M17 7 L12.5 12 L17 17" fill="none" stroke="#8ea3ba" stroke-width="1.3"/><path d="M43 7 L38.5 12 L43 17" fill="none" stroke="#8ea3ba" stroke-width="1.3"/><path d="M149.5 7 L154 12 L149.5 17" fill="none" stroke="#8ea3ba" stroke-width="1.3"/><path d="M175 7 L179.5 12 L175 17 M180 7 L184.5 12 L180 17" fill="none" stroke="#8ea3ba" stroke-width="1.3"/><text x="64" y="17" font-size="13" fill="#8ea3ba">1</text><text x="89.5" y="17" font-size="13" fill="#8ea3ba">of</text><text x="116" y="17" font-size="13" fill="#8ea3ba">12</text></svg><div class="tbl" style="left:1136px;top:634px;width:527px;height:330px"><div class="th"></div><div style="position:absolute;left:0;top:26px;width:515px;height:1px;background:#293b58"></div><div style="position:absolute;left:515px;top:27px;width:10px;bottom:0;background:#19233a"></div><div class="hc" style="left:31px">Computer</div><div class="hc" style="left:165px">service</div><div class="hc" style="right:24px">Total</div><div class="row" style="top:27px;width:515px"><div class="c num" style="left:3px;width:24px;text-align:center">1</div><div class="c" style="left:31px;">EC2AMAZ-ER3EF3C</div><div class="c" style="left:167px;">WinHTTP Web Proxy Auto-Discovery Service</div><div class="c" style="right:8.5px;font-family:'Liberation Mono',monospace;font-size:11.6px">1,190</div></div><div class="row" style="top:54px;width:515px"><div class="c num" style="left:3px;width:24px;text-align:center">2</div><div class="c" style="left:31px;">EC2AMAZ-ER3EF3C</div><div class="c" style="left:167px;">Network Setup Service</div><div class="c" style="right:8.5px;font-family:'Liberation Mono',monospace;font-size:11.6px">1,152</div></div><div class="row" style="top:81px;width:515px"><div class="c num" style="left:3px;width:24px;text-align:center">3</div><div class="c" style="left:31px;">EC2AMAZ-J7K308I</div><div class="c" style="left:167px;">Windows Update</div><div class="c" style="right:8.5px;font-family:'Liberation Mono',monospace;font-size:11.6px">274</div></div><div class="row" style="top:108px;width:515px"><div class="c num" style="left:3px;width:24px;text-align:center">4</div><div class="c" style="left:31px;">EC2AMAZ-ER3EF3C</div><div class="c" style="left:167px;">Microsoft Account Sign-in Assistant</div><div class="c" style="right:8.5px;font-family:'Liberation Mono',monospace;font-size:11.6px">244</div></div><div class="row" style="top:135px;width:515px"><div class="c num" style="left:3px;width:24px;text-align:center">5</div><div class="c" style="left:31px;">EC2AMAZ-J7K308I</div><div class="c" style="left:167px;">WinHTTP Web Proxy Auto-Discovery Service</div><div class="c" style="right:8.5px;font-family:'Liberation Mono',monospace;font-size:11.6px">200</div></div><div class="row" style="top:162px;width:515px"><div class="c num" style="left:3px;width:24px;text-align:center">6</div><div class="c" style="left:31px;">WIN-6C5PO5FS029</div><div class="c" style="left:167px;">WinHTTP Web Proxy Auto-Discovery Service</div><div class="c" style="right:8.5px;font-family:'Liberation Mono',monospace;font-size:11.6px">190</div></div><div class="row" style="top:189px;width:515px"><div class="c num" style="left:3px;width:24px;text-align:center">7</div><div class="c" style="left:31px;">EC2AMAZ-ER3EF3C</div><div class="c" style="left:167px;">Windows Modules Installer</div><div class="c" style="right:8.5px;font-family:'Liberation Mono',monospace;font-size:11.6px">186</div></div><div class="row" style="top:216px;width:515px"><div class="c num" style="left:3px;width:24px;text-align:center">8</div><div class="c" style="left:31px;">WIN-6C5PO5FS029</div><div class="c" style="left:167px;">Windows Modules Installer</div><div class="c" style="right:8.5px;font-family:'Liberation Mono',monospace;font-size:11.6px">179</div></div><div class="row" style="top:243px;width:515px"><div class="c num" style="left:3px;width:24px;text-align:center">9</div><div class="c" style="left:31px;">WIN-6C5PO5FS029</div><div class="c" style="left:167px;">Windows Update</div><div class="c" style="right:8.5px;font-family:'Liberation Mono',monospace;font-size:11.6px">164</div></div><div class="row" style="top:270px;width:515px"><div class="c num" style="left:3px;width:24px;text-align:center">10</div><div class="c" style="left:31px;">EC2AMAZ-ER3EF3C</div><div class="c" style="left:167px;">Windows Update</div><div class="c" style="right:8.5px;font-family:'Liberation Mono',monospace;font-size:11.6px">143</div></div><div class="row" style="top:297px;width:515px"><div class="c num" style="left:3px;width:24px;text-align:center">11</div><div class="c" style="left:31px;">EC2AMAZ-J7K308I</div><div class="c" style="left:167px;">Update Orchestrator Service for Windows Update</div><div class="c" style="right:8.5px;font-family:'Liberation Mono',monospace;font-size:11.6px">140</div></div><div class="row" style="top:324px;width:515px"><div class="c num" style="left:3px;width:24px;text-align:center">12</div><div class="c" style="left:31px;"></div><div class="c" style="left:167px;"></div><div class="c" style="right:8.5px;font-family:'Liberation Mono',monospace;font-size:11.6px"></div></div><div style="position:absolute;left:517px;top:28px;width:6px;height:164px;background:#2c4a66;border-radius:3px"></div></div><div class="a" style="left:401px;top:1074px;width:693px;height:1px;background:#394a68"></div><svg class="a" style="left:380px;top:1060px" width="20" height="21"><text x="16" y="17.6" font-size="12" fill="#e6eaee" text-anchor="end">9</text></svg></body></html>
